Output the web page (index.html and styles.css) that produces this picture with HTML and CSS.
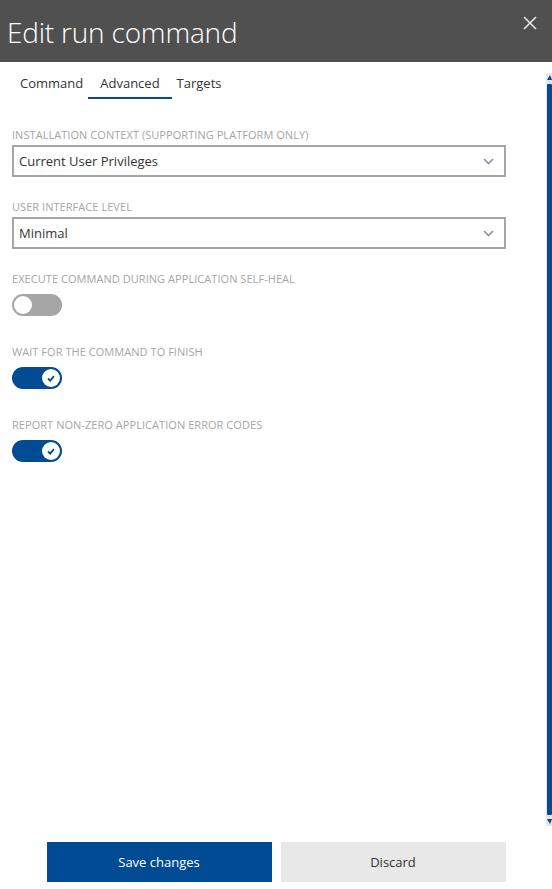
FILE: index.html
```html
<!DOCTYPE html>
<html lang="en">
<head>
<meta charset="utf-8">
<title>Edit run command</title>
<link rel="stylesheet" href="styles.css">
</head>
<body>
<div class="panel">
  <header class="header">
    <h1 class="title">Edit run command</h1>
    <button class="close" aria-label="Close">
      <svg width="14" height="14" viewBox="0 0 14 14"><path d="M1 1 L13 13 M13 1 L1 13" stroke="#e6e6e6" stroke-width="1.6" fill="none"/></svg>
    </button>
  </header>
  <div class="main">
    <div class="content">
      <nav class="tabs">
        <span class="tab">Command</span>
        <span class="tab active">Advanced</span>
        <span class="tab">Targets</span>
      </nav>
      <div class="form">
        <div class="field">
          <div class="label">Installation context (supporting platform only)</div>
          <div class="select">
            <span>Current User Privileges</span>
            <svg class="chev" width="11" height="7" viewBox="0 0 11 7"><path d="M1 1 L5.5 5.5 L10 1" stroke="#8893a8" stroke-width="1.6" fill="none"/></svg>
          </div>
        </div>
        <div class="field">
          <div class="label">User interface level</div>
          <div class="select">
            <span>Minimal</span>
            <svg class="chev" width="11" height="7" viewBox="0 0 11 7"><path d="M1 1 L5.5 5.5 L10 1" stroke="#8893a8" stroke-width="1.6" fill="none"/></svg>
          </div>
        </div>
        <div class="field toggle-field">
          <div class="label">Execute command during application self-heal</div>
          <div class="toggle off"><span class="knob"></span></div>
        </div>
        <div class="field toggle-field">
          <div class="label">Wait for the command to finish</div>
          <div class="toggle on"><span class="knob"><svg width="8" height="7" viewBox="0 0 8 7"><path d="M1 3.5 L3.2 5.6 L7 1.2" stroke="#004b93" stroke-width="1.8" fill="none"/></svg></span></div>
        </div>
        <div class="field toggle-field">
          <div class="label">Report non-zero application error codes</div>
          <div class="toggle on"><span class="knob"><svg width="8" height="7" viewBox="0 0 8 7"><path d="M1 3.5 L3.2 5.6 L7 1.2" stroke="#004b93" stroke-width="1.8" fill="none"/></svg></span></div>
        </div>
      </div>
    </div>
    <div class="scrollbar">
      <span class="arrow up"></span>
      <span class="thumb"></span>
      <span class="arrow down"></span>
    </div>
  </div>
  <footer class="footer">
    <button class="btn primary">Save changes</button>
    <button class="btn secondary">Discard</button>
  </footer>
</div>
</body>
</html>
```
FILE: styles.css
```css
html, body {
  margin: 0;
  padding: 0;
  background: #ffffff;
}
body {
  font-family: "Open Sans", "Noto Sans", sans-serif;
  color: #333333;
}
.panel {
  display: flex;
  flex-direction: column;
  height: 889px;
  width: 552px;
}
.header {
  height: 62px;
  flex: 0 0 62px;
  background: #505050;
  display: flex;
  align-items: center;
  justify-content: space-between;
  padding: 0 14px 0 7px;
  box-sizing: border-box;
}
.title {
  margin: 0;
  font-weight: 300;
  font-size: 28px;
  color: #ffffff;
  letter-spacing: -0.2px;
  line-height: 62px;
  padding-top: 2px;
}
.close {
  background: none;
  border: 0;
  padding: 0;
  width: 16px;
  height: 16px;
  display: flex;
  align-items: center;
  justify-content: center;
  align-self: flex-start;
  margin-top: 15px;
}
.main {
  flex: 1;
  display: flex;
  min-height: 0;
}
.content {
  flex: 1;
  min-width: 0;
}
.tabs {
  display: flex;
  padding-left: 15px;
  margin-top: 8px;
}
.tab {
  font-size: 13px;
  line-height: 27px;
  padding: 0 5px;
  color: #333333;
  border-bottom: 2px solid transparent;
}
.tab.active {
  border-bottom-color: #004b93;
  padding: 0 12px;
}
.form {
  padding: 28px 40px 0 12px;
}
.field {
  margin-bottom: 22px;
}
.toggle-field {
  margin-bottom: 28px;
}
.label {
  font-size: 11px;
  line-height: 16px;
  color: #a6a6a6;
  text-transform: uppercase;
  margin-bottom: 2px;
  letter-spacing: 0.05px;
}
.toggle-field .label {
  margin-bottom: 7px;
}
.select {
  height: 32px;
  box-sizing: border-box;
  border: 2px solid #a6a6a6;
  display: flex;
  align-items: center;
  justify-content: space-between;
  padding: 0 10px 0 5px;
  font-size: 13px;
  color: #333333;
}
.chev {
  margin-top: 1px;
}
.toggle {
  width: 50px;
  height: 22px;
  border-radius: 11px;
  display: flex;
  align-items: center;
  padding: 0 2px;
  box-sizing: border-box;
}
.toggle.off {
  background: #a6a6a6;
  justify-content: flex-start;
}
.toggle.on {
  background: #004b93;
  justify-content: flex-end;
}
.knob {
  width: 18px;
  height: 18px;
  border-radius: 50%;
  background: #ffffff;
  display: flex;
  align-items: center;
  justify-content: center;
}
.scrollbar {
  width: 6px;
  margin: 11px 0 4px;
  background: #e6e6e6;
  display: flex;
  flex-direction: column;
  align-items: flex-end;
  padding: 2px 0;
  box-sizing: border-box;
}
.arrow {
  width: 0;
  height: 0;
  border-left: 3px solid transparent;
  border-right: 2px solid transparent;
}
.arrow.up {
  border-bottom: 5px solid #004b93;
}
.arrow.down {
  border-top: 5px solid #004b93;
}
.thumb {
  flex: 1;
  width: 5px;
  background: #004b93;
  margin: 4px 0;
  border-radius: 1px;
}
.footer {
  flex: 0 0 auto;
  display: flex;
  justify-content: center;
  gap: 9px;
  padding: 12px 0 7px;
}
.btn {
  width: 225px;
  height: 40px;
  border: 0;
  font-family: "Open Sans", "Noto Sans", sans-serif;
  font-size: 13px;
  cursor: pointer;
}
.btn.primary {
  background: #004b93;
  color: #ffffff;
}
.btn.secondary {
  background: #e8e8e8;
  color: #333333;
}
```
